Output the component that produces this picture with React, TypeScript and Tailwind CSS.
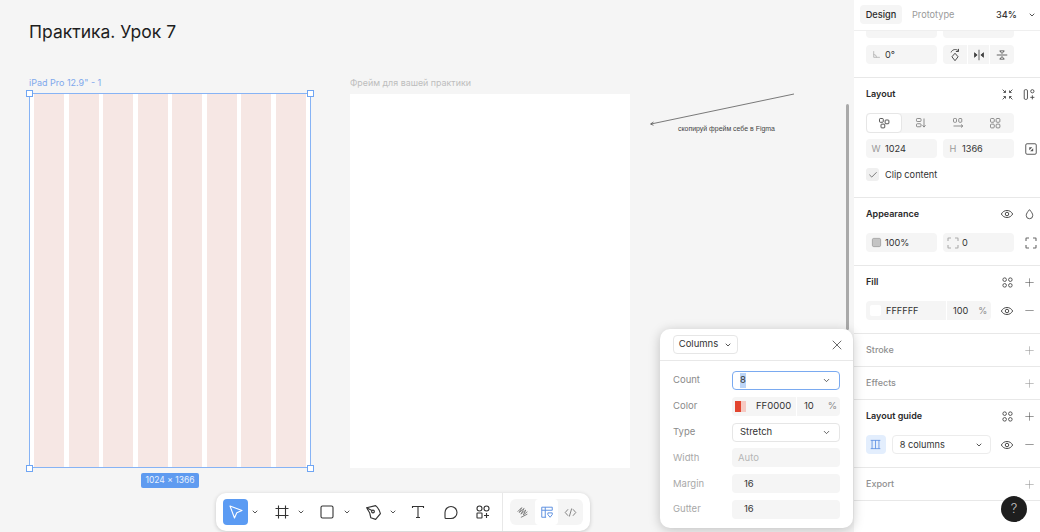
import React from 'react';
import { Check, ChevronDown, Minus, Plus, X } from 'lucide-react';

const Svg = ({ size = 14, children, className = '' }: { size?: number; children: React.ReactNode; className?: string }) => (
  <svg width={size} height={size} viewBox="0 0 16 16" fill="none" stroke="currentColor" strokeWidth={1.1} className={`shrink-0 ${className}`}>
    {children}
  </svg>
);

const FourDots = () => (
  <Svg size={13}>
    <circle cx="4.5" cy="4.5" r="2.2" />
    <circle cx="11.5" cy="4.5" r="2.2" />
    <circle cx="4.5" cy="11.5" r="2.2" />
    <circle cx="11.5" cy="11.5" r="2.2" />
  </Svg>
);

const FourDotsSquare = () => (
  <Svg size={12}>
    <rect x="2" y="2" width="5" height="5" rx="1.2" />
    <rect x="9.5" y="2" width="5" height="5" rx="1.2" />
    <rect x="2" y="9.5" width="5" height="5" rx="1.2" />
    <rect x="9.5" y="9.5" width="5" height="5" rx="1.2" />
  </Svg>
);

const Eye = () => (
  <Svg size={14}>
    <path d="M1.5 8c1.6-2.7 3.8-4 6.5-4s4.9 1.3 6.5 4c-1.6 2.7-3.8 4-6.5 4s-4.9-1.3-6.5-4z" />
    <circle cx="8" cy="8" r="2" />
  </Svg>
);

const Corners = () => (
  <Svg size={16} className="opacity-80">
    <path d="M3 6V3.500a.5.5 0 0 1 .5-.5H6M10 3h2.500a.5.5 0 0 1 .5.500V6M13 10v2.500a.5.5 0 0 1-.5.500H10M6 13H3.500a.5.5 0 0 1-.5-.5V10" />
  </Svg>
);

const Field = ({ label, value }: { label?: React.ReactNode; value: string }) => (
  <div className="flex h-[19px] w-[71px] shrink-0 items-center gap-[4px] rounded-[4px] bg-[#f5f5f5] px-[5px] text-[#333333]">
    {label && <span className="flex w-[10px] items-center justify-center text-[#9a9a9a]">{label}</span>}
    <span>{value}</span>
  </div>
);

const SectionHead = ({ title, muted, children }: { title: string; muted?: boolean; children: React.ReactNode }) => (
  <div className="flex h-[16px] items-center justify-between">
    <span className={`text-[9px] ${muted ? 'font-medium text-[#8f8f8f]' : 'font-semibold text-[#2a2a2a]'}`}>{title}</span>
    <div className="flex items-center gap-[9px] text-[#444444]">{children}</div>
  </div>
);

const Row = ({ label, muted, children }: { label: string; muted?: boolean; children: React.ReactNode }) => (
  <div className="flex h-[19px] items-center justify-between">
    <span className={muted ? 'text-[#a8a8a8]' : 'text-[#8a8a8a]'}>{label}</span>
    {children}
  </div>
);

const SelectBox = ({ value }: { value: string }) => (
  <div className="flex h-[19px] w-[108px] items-center justify-between rounded-[4px] border border-[#e6e6e6] bg-white pr-[8px] pl-[7px] text-[#333333]">
    <span>{value}</span>
    <ChevronDown size={9} strokeWidth={2} />
  </div>
);

const Handle = ({ className }: { className: string }) => <div className={`absolute h-[7px] w-[7px] border border-[#6fa5f3] bg-white ${className}`} />;

function Toolbar() {
  return (
    <div className="absolute top-[493px] left-[216px] z-10 flex h-[38px] w-[374px] items-center rounded-[10px] bg-white pl-[7px] text-[#333333] shadow-[0_1px_4px_rgba(0,0,0,0.18)]">
      <div className="flex h-[26px] w-[25px] items-center justify-center rounded-[4px] bg-[#5b9bf3] text-white">
        <svg width="16" height="16" viewBox="0 0 16 16" fill="none" stroke="currentColor" strokeWidth="1.1">
          <path d="M2 2l12 4.500-5.200 2.300L6.500 14z" strokeLinejoin="round" />
        </svg>
      </div>
      <ChevronDown size={8} strokeWidth={2.5} className="ml-[3px]" />
      <div className="ml-[15px] flex h-[26px] w-[16px] items-center justify-center">
        <Svg size={16}>
          <path d="M4.500 1.500v13M11.500 1.500v13M1.500 4.500h13M1.500 11.500h13" />
        </Svg>
      </div>
      <ChevronDown size={8} strokeWidth={2.5} className="ml-[7px]" />
      <div className="ml-[14px] flex h-[26px] w-[16px] items-center justify-center">
        <Svg size={16}>
          <rect x="2" y="2" width="12" height="12" rx="1.5" />
        </Svg>
      </div>
      <ChevronDown size={8} strokeWidth={2.5} className="ml-[8px]" />
      <div className="ml-[13px] flex h-[26px] w-[18px] items-center justify-center">
        <Svg size={17}>
          <path d="M1.500 3.500 10 1.500c2 1.500 3.500 4 4.500 7.500l-4.500 5.500-4.500-1.500c-.5-3.500-2-7-4-9.500z" strokeLinejoin="round" />
          <circle cx="7.500" cy="7" r="1.300" />
          <path d="M2 3.800l4.500 2.400" />
        </Svg>
      </div>
      <ChevronDown size={8} strokeWidth={2.5} className="ml-[7px]" />
      <div className="ml-[13px] flex h-[26px] w-[16px] items-center justify-center">
        <Svg size={16}>
          <path d="M2.500 4V2.500h11V4M8 2.500v11M6 13.500h4" />
        </Svg>
      </div>
      <div className="ml-[17px] flex h-[26px] w-[16px] items-center justify-center">
        <Svg size={16}>
          <path d="M2 8.500a6 6 0 1 1 6 6H3a1 1 0 0 1-1-1z" strokeLinejoin="round" />
        </Svg>
      </div>
      <div className="ml-[16px] flex h-[26px] w-[16px] items-center justify-center">
        <Svg size={16}>
          <circle cx="4.500" cy="4.500" r="2.500" />
          <circle cx="11.500" cy="4.500" r="2.500" />
          <rect x="2" y="9" width="5" height="5" rx="0.5" />
          <path d="M11.500 9v5M9 11.500h5" />
        </Svg>
      </div>
      <div className="ml-[11px] h-full w-px bg-[#e8e8e8]" />
      <div className="ml-[7px] flex h-[26px] w-[73px] items-center rounded-[6px] bg-[#f5f5f5]">
        <div className="flex h-full w-[25px] items-center justify-center text-[#777777]">
          <Svg size={13}>
            <path d="M2 7l5-5-3 6 6-5-4 7 6-5-3 6 5-4M6 14l8-4" />
          </Svg>
        </div>
        <div className="flex h-full w-[23px] items-center justify-center rounded-[4px] bg-white text-[#5b8fe0]">
          <Svg size={14}>
            <path d="M2 7V2.500h12V6M2 6h12M2 7v7h5M6 2.500V14" />
            <path d="M9 9h5v2l-2.500 3L9 11z" />
          </Svg>
        </div>
        <div className="flex h-full w-[25px] items-center justify-center text-[#777777]">
          <Svg size={13}>
            <path d="M5 4 1.500 8 5 12M11 4l3.500 4L11 12M9.500 3l-3 10" />
          </Svg>
        </div>
      </div>
    </div>
  );
}

function CanvasArea() {
  const columns = [0, 1, 2, 3, 4, 5, 6, 7];
  return (
    <div className="relative h-full w-[854px] shrink-0 bg-[#f5f5f5] font-['Inter',sans-serif]">
      <h1 className="absolute top-[20px] left-[29px] text-[17.5px] leading-[24px] text-[#1e1e1e]">Практика. Урок 7</h1>

      <span className="absolute top-[77px] left-[29px] text-[9px] leading-[12px] text-[#7fa8ec]">iPad Pro 12.9" - 1</span>
      <div className="absolute top-[93px] left-[29px] flex h-[375px] w-[282px] gap-[4.57px] border border-[#86b3f5] bg-white px-[4px]">
        {columns.map((c) => (
          <div key={c} className="flex-1 bg-[#f6e7e4]" />
        ))}
      </div>
      {/* selection handles */}
      <Handle className="top-[90px] left-[26px]" />
      <Handle className="top-[90px] left-[307px]" />
      <Handle className="top-[465px] left-[26px]" />
      <Handle className="top-[465px] left-[307px]" />
      <div className="absolute top-[473px] left-[141px] flex h-[15px] w-[58px] items-center justify-center rounded-[2px] bg-[#5f9bf0] text-[8.5px] text-[#e8f1fe]">
        1024 × 1366
      </div>

      <span className="absolute top-[77px] left-[350px] text-[8.9px] leading-[12px] text-[#bdbdbd]">Фрейм для вашей практики</span>
      <div className="absolute top-[94px] left-[350px] h-[374px] w-[280px] bg-white" />

      <svg className="absolute top-[90px] left-[645px]" width="155" height="40" fill="none" stroke="#444444" strokeWidth="0.7">
        <path d="M149 4 6 34M8.500 32 5.500 34l3 1.300" />
      </svg>
      <span className="absolute top-[124px] left-[678px] font-['Liberation_Sans',sans-serif] text-[6.95px] leading-[10px] text-[#444444]">скопируй фрейм себе в Figma</span>

      {/* scrollbar */}
      <div className="absolute top-[104px] left-[846px] h-[226px] w-[3px] rounded-full bg-[#a9a9a9]" />

      <Toolbar />
    </div>
  );
}

function ColumnsPopover() {
  return (
    <div className="absolute top-[329px] left-[660px] z-20 flex h-[199px] w-[193px] flex-col rounded-[10px] bg-white font-['Inter',sans-serif] text-[9.5px] shadow-[0_2px_12px_rgba(0,0,0,0.22)]">
      <div className="flex h-[32px] shrink-0 items-center justify-between border-b border-[#e8e8e8] pr-[8px] pl-[13px]">
        <div className="flex h-[19px] w-[65px] items-center justify-center gap-[6px] rounded-[4px] border border-[#e6e6e6] text-[#333333]">
          Columns
          <ChevronDown size={8} strokeWidth={2.5} />
        </div>
        <X size={16} strokeWidth={1.1} className="text-[#333333]" />
      </div>
      <div className="flex flex-col gap-[6.8px] pt-[10px] pr-[13px] pl-[13px]">
        <Row label="Count">
          <div className="flex h-[19px] w-[108px] items-center justify-between rounded-[4px] border border-[#7aaaf0] bg-white pr-[8px] pl-[7px] text-[#333333]">
            <span className="bg-[#bcd5f7]">8</span>
            <ChevronDown size={9} strokeWidth={2} />
          </div>
        </Row>
        <Row label="Color">
          <div className="flex h-[19px] w-[108px] items-center rounded-[4px] bg-[#f5f5f5] text-[#333333]">
            <div className="ml-[3px] flex h-[11px] w-[11px]">
              <span className="w-1/2 bg-[#e2452f]" />
              <span className="w-1/2 bg-[#f6c9c2]" />
            </div>
            <span className="ml-[10px] w-[40px]">FF0000</span>
            <span className="h-full w-px bg-white" />
            <span className="ml-[7px]">10</span>
            <span className="ml-[14px] text-[#8a8a8a]">%</span>
          </div>
        </Row>
        <Row label="Type">
          <SelectBox value="Stretch" />
        </Row>
        <Row label="Width" muted>
          <div className="flex h-[19px] w-[108px] items-center rounded-[4px] bg-[#f5f5f5] pl-[6px] text-[#b5b5b5]">Auto</div>
        </Row>
        <Row label="Margin" muted>
          <div className="flex h-[19px] w-[108px] items-center rounded-[4px] bg-[#f5f5f5] pl-[12px] text-[#333333]">16</div>
        </Row>
        <Row label="Gutter" muted>
          <div className="flex h-[19px] w-[108px] items-center rounded-[4px] bg-[#f5f5f5] pl-[12px] text-[#333333]">16</div>
        </Row>
      </div>
    </div>
  );
}

function RightPanel() {
  return (
    <aside className="flex h-full w-[186px] shrink-0 flex-col overflow-hidden bg-white font-['Inter',sans-serif] text-[9.2px] leading-[12px]">
      <div className="flex h-[31px] shrink-0 items-center border-b border-[#efefef] pr-[4px] pb-[1px] pl-[6px]">
        <span className="flex h-[19px] w-[42px] items-center justify-center rounded-[4px] bg-[#f5f5f5] font-medium text-[#2a2a2a]">Design</span>
        <span className="ml-[10px] text-[#9a9a9a]">Prototype</span>
        <span className="ml-auto font-medium text-[#333333]">34%</span>
        <ChevronDown size={8} strokeWidth={2.5} className="ml-[11px] text-[#333333]" />
      </div>

      {/* transform */}
      <div className="flex h-[47px] shrink-0 flex-col border-b border-[#e8e8e8] pl-[12px]">
        <div className="flex gap-[6px]">
          <div className="h-[7px] w-[71px] rounded-b-[4px] bg-[#f5f5f5]" />
          <div className="h-[7px] w-[71px] rounded-b-[4px] bg-[#f5f5f5]" />
        </div>
        <div className="mt-[7px] flex gap-[6px]">
          <Field
            label={
              <Svg size={9}>
                <path d="M3 2v11h11M3 8a5 5 0 0 1 5 5" />
              </Svg>
            }
            value="0°"
          />
          <div className="flex h-[19px] w-[71px] items-center rounded-[4px] bg-[#f5f5f5] text-[#444444]">
            <div className="flex h-full w-[24px] items-center justify-center">
              <Svg size={14}>
                <path d="M8 6l3.500 4L8 14.500 4.500 10zM3.500 5A5 5 0 0 1 12 3.500M12 1v3h-3" />
              </Svg>
            </div>
            <div className="flex h-full w-[23px] items-center justify-center border-x border-white">
              <Svg size={12}>
                <path d="M8 1v14" />
                <path d="M2 5v6l3.500-3zM14 5v6l-3.500-3z" fill="currentColor" />
              </Svg>
            </div>
            <div className="flex h-full w-[24px] items-center justify-center">
              <Svg size={12}>
                <path d="M1 8h14" />
                <path d="M5 2.500h6L8 6zM5 13.500h6L8 10z" />
              </Svg>
            </div>
          </div>
        </div>
      </div>

      {/* layout */}
      <div className="flex h-[120px] shrink-0 flex-col border-b border-[#e8e8e8] pt-[8px] pr-[4px] pl-[12px]">
        <SectionHead title="Layout">
          <Svg size={13}>
            <path d="M2 2l3.500 3.500M5.500 3v2.500H3M14 2l-3.500 3.500M10.500 3v2.500H13M2 14l3.500-3.500M5.500 13v-2.500H3M14 14l-3.500-3.500M10.500 13v-2.500H13" />
          </Svg>
          <Svg size={13}>
            <rect x="1.500" y="2" width="4" height="12" rx="1.5" />
            <circle cx="11.500" cy="4" r="2" />
            <path d="M11.500 9v5M9 11.500h5" />
          </Svg>
        </SectionHead>
        <div className="mt-[11px] flex h-[20px] w-[148px] items-center rounded-[4px] bg-[#f5f5f5] text-[#777777]">
          <div className="flex h-full w-[36px] items-center justify-center rounded-[4px] border border-[#e6e6e6] bg-white text-[#333333]">
            <Svg size={12}>
              <rect x="2" y="2" width="5" height="5" rx="1" />
              <rect x="9.500" y="4" width="5" height="5" rx="1" />
              <rect x="4" y="9.500" width="5" height="5" rx="1" />
            </Svg>
          </div>
          <div className="flex h-full w-[37px] items-center justify-center">
            <Svg size={12}>
              <rect x="2" y="2" width="6" height="4" rx="1" />
              <rect x="2" y="9" width="6" height="4" rx="1" />
              <path d="M12 2v11M10 11l2 2.500 2-2.500" />
            </Svg>
          </div>
          <div className="flex h-full w-[37px] items-center justify-center">
            <Svg size={12}>
              <rect x="2" y="2" width="4" height="5" rx="1" />
              <rect x="9" y="2" width="4" height="5" rx="1" />
              <path d="M2 12h12M12 10l2.500 2-2.500 2" />
            </Svg>
          </div>
          <div className="flex h-full w-[37px] items-center justify-center">
            <FourDotsSquare />
          </div>
        </div>
        <div className="mt-[6px] flex items-center gap-[6px]">
          <Field label="W" value="1024" />
          <Field label="H" value="1366" />
          <div className="ml-[3px] flex h-[19px] w-[16px] shrink-0 items-center justify-center text-[#555555]">
            <Svg size={14}>
              <rect x="2" y="2" width="12" height="12" rx="1.5" />
              <path d="M6 6h3.500l-3.500 3.500zM10.500 10.500H7l3.500-3.500z" fill="currentColor" stroke="none" />
            </Svg>
          </div>
        </div>
        <div className="mt-[10px] flex items-center gap-[6px] text-[#333333]">
          <div className="flex h-[13px] w-[13px] items-center justify-center rounded-[3px] bg-[#f0f0f0]">
            <Check size={10} strokeWidth={1.5} />
          </div>
          <span>Clip content</span>
        </div>
      </div>

      {/* appearance */}
      <div className="flex h-[68px] shrink-0 flex-col border-b border-[#e8e8e8] pt-[8px] pr-[4px] pl-[12px]">
        <SectionHead title="Appearance">
          <Eye />
          <Svg size={13}>
            <path d="M8 2c2.500 3 4 5 4 7.200A4 4 0 0 1 4 9.200C4 7 5.500 5 8 2z" />
          </Svg>
        </SectionHead>
        <div className="mt-[11px] flex items-center gap-[6px]">
          <Field
            label={
              <Svg size={11}>
                <rect x="2" y="2" width="12" height="12" rx="2" fill="#c4c4c4" />
              </Svg>
            }
            value="100%"
          />
          <Field label={<Corners />} value="0" />
          <div className="ml-[3px] flex h-[19px] w-[16px] shrink-0 items-center justify-center text-[#444444]">
            <Corners />
          </div>
        </div>
      </div>

      {/* fill */}
      <div className="flex h-[68px] shrink-0 flex-col border-b border-[#e8e8e8] pt-[8px] pr-[4px] pl-[12px]">
        <SectionHead title="Fill">
          <FourDots />
          <Plus size={13} strokeWidth={1} />
        </SectionHead>
        <div className="mt-[11px] flex items-center">
          <div className="flex h-[19px] w-[125px] items-center rounded-[4px] bg-[#f5f5f5] text-[#333333]">
            <div className="ml-[4px] h-[11px] w-[11px] rounded-[2px] bg-white" />
            <span className="ml-[5px] w-[60px]">FFFFFF</span>
            <span className="h-full w-px bg-white" />
            <span className="ml-[6px]">100</span>
            <span className="ml-[10px] text-[#8a8a8a]">%</span>
          </div>
          <div className="ml-[9px] flex items-center gap-[9px] text-[#444444]">
            <Eye />
            <Minus size={13} strokeWidth={1} />
          </div>
        </div>
      </div>

      <div className="flex h-[33px] shrink-0 items-center border-b border-[#e8e8e8] pr-[4px] pl-[12px]">
        <div className="w-full">
          <SectionHead title="Stroke" muted>
            <Plus size={13} strokeWidth={1} className="text-[#8f8f8f]" />
          </SectionHead>
        </div>
      </div>
      <div className="flex h-[33px] shrink-0 items-center border-b border-[#e8e8e8] pr-[4px] pl-[12px]">
        <div className="w-full">
          <SectionHead title="Effects" muted>
            <Plus size={13} strokeWidth={1} className="text-[#8f8f8f]" />
          </SectionHead>
        </div>
      </div>

      {/* layout guide */}
      <div className="flex h-[68px] shrink-0 flex-col border-b border-[#e8e8e8] pt-[8px] pr-[4px] pl-[12px]">
        <SectionHead title="Layout guide">
          <FourDots />
          <Plus size={13} strokeWidth={1} />
        </SectionHead>
        <div className="mt-[11px] flex items-center">
          <div className="flex h-[19px] w-[20px] items-center justify-center rounded-[4px] bg-[#e3eefd] text-[#4f86e0]">
            <Svg size={11}>
              <path d="M1 2h14M1 14h14M3 2v12M8 2v12M13 2v12" />
            </Svg>
          </div>
          <div className="ml-[6px] flex h-[19px] w-[100px] items-center justify-between rounded-[4px] border border-[#ececec] pr-[7px] pl-[7px] text-[#333333]">
            <span>8 columns</span>
            <ChevronDown size={8} strokeWidth={2.5} />
          </div>
          <div className="ml-[9px] flex items-center gap-[9px] text-[#444444]">
            <Eye />
            <Minus size={13} strokeWidth={1} />
          </div>
        </div>
      </div>

      <div className="flex h-[33px] shrink-0 items-center border-b border-[#e8e8e8] pr-[4px] pl-[12px]">
        <div className="w-full">
          <SectionHead title="Export" muted>
            <Plus size={13} strokeWidth={1} className="text-[#8f8f8f]" />
          </SectionHead>
        </div>
      </div>
    </aside>
  );
}

export default function App() {
  return (
    <div className="relative flex h-[532px] w-[1040px] overflow-hidden">
      <CanvasArea />
      <RightPanel />
      <ColumnsPopover />
      <div className="absolute top-[496px] left-[1001px] z-20 flex h-[26px] w-[26px] items-center justify-center rounded-full bg-[#1e1e1e] font-['Inter',sans-serif] text-[13px] font-light text-[#c8c8c8]">
        ?
      </div>
    </div>
  );
}
